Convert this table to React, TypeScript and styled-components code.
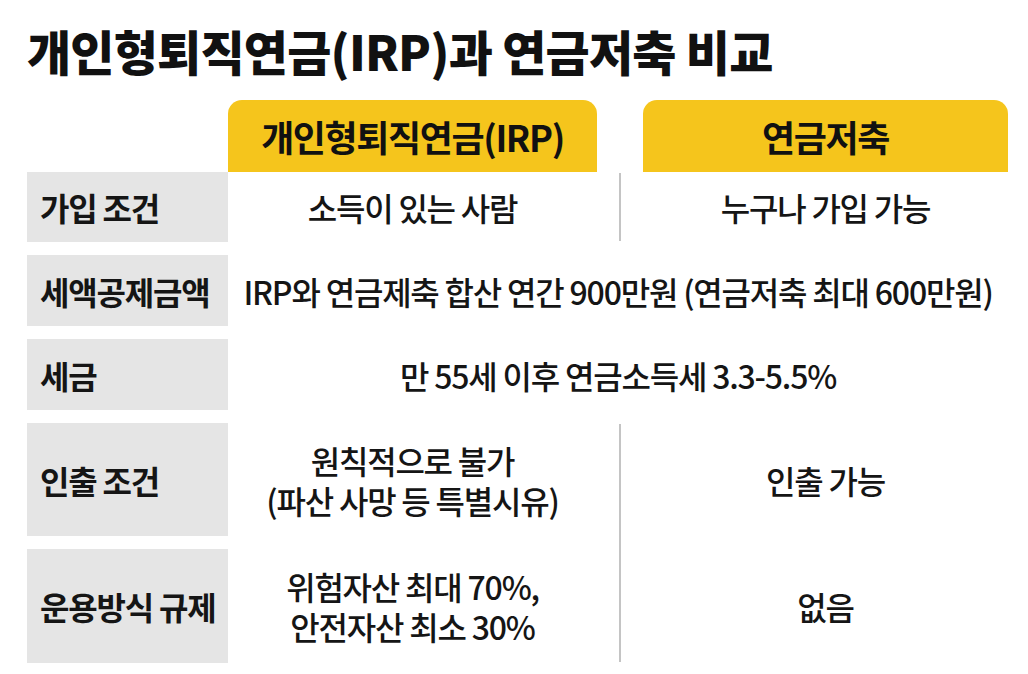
import React from "react";
import styled, { createGlobalStyle } from "styled-components";

const Global = createGlobalStyle`
  html, body { margin: 0; padding: 0; background: #ffffff; }
  body { font-family: "Noto Sans CJK KR", "Noto Sans", sans-serif; color: #111; }
`;

const Page = styled.div`
  width: 1028px;
  height: 674px;
  box-sizing: border-box;
  padding: 18px 20px 0 27px;
  overflow: hidden;
`;

const Title = styled.h1`
  margin: 0 0 0 0;
  font-size: 48px;
  line-height: 64px;
  font-weight: 900;
  letter-spacing: -0.8px;
  color: #111;
  white-space: nowrap;
`;

const COLS = "201px 369px 46px 365px";

const HeaderRow = styled.div`
  display: grid;
  grid-template-columns: ${COLS};
  height: 72px;
  margin-top: 18px;
`;

const Tab = styled.div<{ $col: number }>`
  grid-column: ${(p) => p.$col};
  background: #f5c51c;
  border-radius: 14px 14px 0 0;
  display: flex;
  align-items: center;
  justify-content: center;
  font-size: 36px;
  font-weight: 700;
  letter-spacing: -1.4px;
  color: #111;
  white-space: nowrap;
`;

const Body = styled.div`
  display: grid;
  grid-template-columns: ${COLS};
  grid-template-rows: 70px 71px 71px 113px 114px;
  row-gap: 13px;
`;

const Label = styled.div<{ $row: number }>`
  grid-column: 1;
  grid-row: ${(p) => p.$row};
  background: #e5e5e5;
  display: flex;
  align-items: center;
  padding-left: 13px;
  font-size: 32px;
  font-weight: 700;
  letter-spacing: -1.2px;
  color: #151515;
  white-space: nowrap;
`;

const Cell = styled.div<{ $row: number; $col: string }>`
  grid-column: ${(p) => p.$col};
  grid-row: ${(p) => p.$row};
  display: flex;
  flex-direction: column;
  align-items: center;
  justify-content: center;
  text-align: center;
  font-size: 32px;
  line-height: 40px;
  font-weight: 500;
  letter-spacing: -1.2px;
  color: #151515;
  white-space: nowrap;
`;

const Divider = styled.div<{ $rows: string }>`
  grid-column: 3;
  grid-row: ${(p) => p.$rows};
  justify-self: center;
  width: 2px;
  margin: 1px 0;
  background: #c4c4c4;
`;

export default function App() {
  return (
    <>
      <Global />
      <Page>
        <Title>개인형퇴직연금(IRP)과 연금저축 비교</Title>
        <HeaderRow>
          <Tab $col={2}>개인형퇴직연금(IRP)</Tab>
          <Tab $col={4}>연금저축</Tab>
        </HeaderRow>
        <Body>
          <Label $row={1}>가입 조건</Label>
          <Cell $row={1} $col="2">소득이 있는 사람</Cell>
          <Divider $rows="1" />
          <Cell $row={1} $col="4">누구나 가입 가능</Cell>

          <Label $row={2}>세액공제금액</Label>
          <Cell $row={2} $col="2 / 5">IRP와 연금제축 합산 연간 900만원 (연금저축 최대 600만원)</Cell>

          <Label $row={3}>세금</Label>
          <Cell $row={3} $col="2 / 5">만 55세 이후 연금소득세 3.3-5.5%</Cell>

          <Label $row={4}>인출 조건</Label>
          <Cell $row={4} $col="2">
            <span>원칙적으로 불가</span>
            <span>(파산 사망 등 특별시유)</span>
          </Cell>
          <Divider $rows="4 / 6" />
          <Cell $row={4} $col="4">인출 가능</Cell>

          <Label $row={5}>운용방식 규제</Label>
          <Cell $row={5} $col="2">
            <span>위험자산 최대 70%,</span>
            <span>안전자산 최소 30%</span>
          </Cell>
          <Cell $row={5} $col="4">없음</Cell>
        </Body>
      </Page>
    </>
  );
}
